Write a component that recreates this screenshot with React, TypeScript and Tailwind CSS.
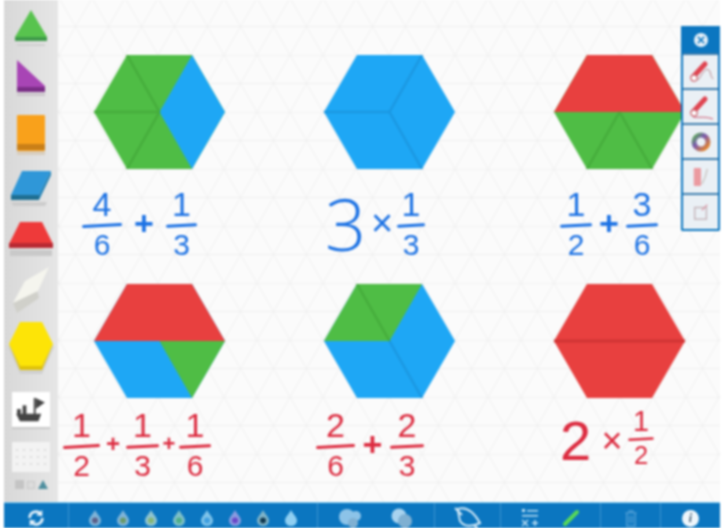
import React from "react";

const GREEN = "#4fbd45";
const BLUE = "#1ea7f5";
const RED = "#e8403f";

const OUT = "0,57 33,0 98,0 131,57 98,114 33,114";

function Hex({ children, fill }: { children?: React.ReactNode; fill: string }) {
  return (
    <svg viewBox="0 0 131 114" className="block w-[131px] h-[114px] mx-auto">
      <polygon points={OUT} fill={fill} />
      {children}
    </svg>
  );
}

function Seam({ x1, y1, x2 = 65.5, y2 = 57, c }: { x1: number; y1: number; x2?: number; y2?: number; c: string }) {
  return <line x1={x1} y1={y1} x2={x2} y2={y2} stroke={c} strokeWidth="2.5" />;
}

const G_S = "#46ad3c";
const B_S = "#1b98e2";
const R_S = "#d03434";

const HEXES = [
  <Hex fill={GREEN} key="a">
    <polygon points="65.5,57 98,0 131,57 98,114" fill={BLUE} />
    <Seam x1={33} y1={0} c={G_S} />
    <Seam x1={0} y1={57} c={G_S} />
    <Seam x1={33} y1={114} c={G_S} />
  </Hex>,
  <Hex fill={BLUE} key="b">
    <Seam x1={0} y1={57} c={B_S} />
    <Seam x1={98} y1={0} c={B_S} />
    <Seam x1={98} y1={114} c={B_S} />
  </Hex>,
  <Hex fill={GREEN} key="c">
    <polygon points="0,57 33,0 98,0 131,57" fill={RED} />
    <Seam x1={33} y1={114} c={G_S} />
    <Seam x1={98} y1={114} c={G_S} />
  </Hex>,
  <Hex fill={BLUE} key="d">
    <polygon points="0,57 33,0 98,0 131,57" fill={RED} />
    <polygon points="65.5,57 131,57 98,114" fill={GREEN} />
  </Hex>,
  <Hex fill={BLUE} key="e">
    <polygon points="0,57 33,0 98,0 65.5,57" fill={GREEN} />
    <Seam x1={33} y1={0} c={G_S} />
    <Seam x1={98} y1={114} c={B_S} />
  </Hex>,
  <Hex fill={RED} key="f">
    <line x1="0" y1="57" x2="131" y2="57" stroke={R_S} strokeWidth="3" />
  </Hex>,
];

function Frac({ n, d, w, red }: { n: string; d: string; w: number; red?: boolean }) {
  return (
    <div className="flex flex-col items-center" style={{ width: w }}>
      <span className="text-[34px] leading-[39px] h-[39px]">{n}</span>
      <span className={`block w-full h-[3px] rounded-full -rotate-3 ${red ? "bg-[#dc2c40]" : "bg-[#1c72e4]"}`} />
      <span className="text-[30px] leading-[35px] h-[35px]">{d}</span>
    </div>
  );
}

function Formula({ pl, red, children }: { pl: number; red?: boolean; children: React.ReactNode }) {
  return (
    <div
      className={`h-[80px] flex items-center font-['Liberation_Sans',sans-serif] ${red ? "text-[#dc2c40]" : "text-[#1c72e4]"}`}
      style={{ paddingLeft: pl }}
    >
      {children}
    </div>
  );
}

function Op({ c, w, size = 34 }: { c: string; w: number; size?: number }) {
  return (
    <span className="leading-none text-center font-bold" style={{ width: w, fontSize: size }}>
      {c}
    </span>
  );
}

function Drop({ c, i }: { c: string; i: string }) {
  return (
    <svg viewBox="0 0 12 16" className="w-[12px] h-[16px]">
      <path d="M6 0 C8 4 12 7 12 10.5 A6 5.5 0 0 1 0 10.5 C0 7 4 4 6 0Z" fill={c} />
      <circle cx="6" cy="10.5" r="3" fill={i} />
    </svg>
  );
}

const DROPS = [
  ["#7fb4d8", "#5c5f88"],
  ["#7fb4d8", "#6a9a6a"],
  ["#8fc4cf", "#86b676"],
  ["#7fc0c8", "#4fae88"],
  ["#7fc4ea", "#3f9fe0"],
  ["#8a9be0", "#6a48c8"],
  ["#7fb4c8", "#123a50"],
  ["#8fcff2", "#8fcff2"],
];

function Section({ w, children, gap, border = true }: { w: number; children?: React.ReactNode; gap?: number; border?: boolean }) {
  return (
    <div
      className={`h-full flex items-center justify-center pt-[5px] ${border ? "border-l border-[#3b93d0]" : ""}`}
      style={{ width: w, gap }}
    >
      {children}
    </div>
  );
}

function PanelBtn({ children }: { children: React.ReactNode }) {
  return <div className="h-[35px] flex items-center justify-center border-t-2 border-[#3f7fae] bg-[#eaf0f5]">{children}</div>;
}

function Pen({ under }: { under: React.ReactNode }) {
  return (
    <svg viewBox="0 0 26 26" className="w-[26px] h-[26px]" fill="none">
      <line x1="5" y1="18" x2="17" y2="5" stroke="#df4450" strokeWidth="5" strokeLinecap="round" />
      <circle cx="6" cy="19" r="3.2" stroke="#c9606a" strokeWidth="1.2" fill="#fff" />
      {under}
    </svg>
  );
}

export default function App() {
  return (
    <div className="w-[724px] h-[528px] bg-white overflow-hidden pl-[4px] pr-[4px] flex flex-col blur-[0.8px]">
      <div className="relative flex flex-1 min-h-0">
        <aside className="w-[54px] shrink-0 bg-gradient-to-r from-[#d8d8d8] to-[#e6e6e6] flex flex-col items-center">
          <svg viewBox="0 0 32 36" className="w-[32px] h-[36px] mt-[10px]">
            <polygon points="2,34 30,34 30,36 2,36" fill="#cfcfcf" />
            <polygon points="16,0 32,27 32,31 0,31 0,27" fill="#58c34e" />
            <polygon points="0,27 32,27 32,31 0,31" fill="#3f9a4a" />
          </svg>
          <svg viewBox="0 0 30 36" className="w-[30px] h-[36px] mt-[14px]">
            <rect x="1" y="33" width="28" height="3" fill="#cbc6cb" />
            <polygon points="1,0 29,26 29,32 1,32" fill="#a845b5" />
            <polygon points="1,27 29,27 29,32 1,32" fill="#7a2e86" />
          </svg>
          <svg viewBox="0 0 30 40" className="w-[30px] h-[40px] mt-[19px]">
            <rect x="1" y="36" width="28" height="4" fill="#d8cdbd" />
            <rect x="1" y="0" width="28" height="36" rx="1" fill="#f9a11b" />
            <rect x="1" y="29" width="28" height="6" fill="#c97f18" />
          </svg>
          <svg viewBox="0 0 44 35" className="w-[44px] h-[35px] mt-[16px]">
            <polygon points="2,31 38,31 36,35 4,35" fill="#cccccc" />
            <polygon points="13,0 42,0 30,24 30,29 2,29 2,24" fill="#2f97d8" />
            <polygon points="2,24 30,24 30,29 2,29" fill="#1f6f92" />
            <polygon points="30,24 42,0 42,4 30,29" fill="#1f7fb2" />
          </svg>
          <svg viewBox="0 0 46 36" className="w-[46px] h-[36px] mt-[16px]">
            <rect x="2" y="28" width="42" height="6" fill="#c9c9c9" />
            <polygon points="12,0 34,0 45,22 45,26 1,26 1,22" fill="#ee3a3a" />
            <polygon points="1,21 45,21 45,26 1,26" fill="#b92a33" />
          </svg>
          <svg viewBox="0 0 40 50" className="w-[40px] h-[50px] mt-[8px]">
            <polygon points="2,37 26,24 28,32 6,47" fill="#d0d0ca" />
            <polygon points="2,37 14,15 38,1 27,25" fill="#f5f5ee" />
          </svg>
          <svg viewBox="0 0 46 56" className="w-[46px] h-[56px] mt-[4px]">
            <polygon points="12,6 34,6 46,27 34,54 12,54 0,27" fill="#d0d0d0" />
            <polygon points="12,2 34,2 45,24 34,46 12,46 1,24" fill="#fde407" />
            <polygon points="1,24 12,46 34,46 45,24 34,50 12,50" fill="#dfc20b" />
          </svg>
          <div className="w-[38px] h-[35px] mt-[16px] bg-white flex items-center justify-center shadow-[0_2px_0_#c8c8c8]">
            <svg viewBox="0 0 32 28" className="w-[30px] h-[26px]" fill="#444">
              <rect x="19" y="1" width="2" height="18" />
              <polygon points="21,1 31,6 21,13" />
              <rect x="7" y="9" width="4" height="10" />
              <rect x="1" y="13" width="4" height="6" />
              <polygon points="0,18 27,18 24,26 4,26" />
            </svg>
          </div>
          <div className="w-[38px] h-[30px] mt-[15px] bg-[#f3f3f3] flex flex-wrap content-center justify-center gap-x-[5px] gap-y-[5px] px-[2px]">
            {Array.from({ length: 15 }).map((_, i) => (
              <span key={i} className="w-[2px] h-[2px] bg-[#dcdcdc]" />
            ))}
          </div>
          <div className="flex items-center gap-[3px] mt-[8px]">
            <span className="w-[9px] h-[9px] bg-[#c4c4c4]" />
            <span className="w-[8px] h-[8px] bg-[#dcdcdc] border border-[#c8c8c8]" />
            <svg viewBox="0 0 10 9" className="w-[10px] h-[9px]">
              <polygon points="5,0 10,9 0,9" fill="#4f8f9f" />
            </svg>
          </div>
        </aside>

        <main className="relative flex-1 bg-[#fbfbfb]">
          <svg className="absolute inset-0 w-full h-full" aria-hidden="true">
            <defs>
              <pattern id="iso" x="1" y="55" width="33" height="57" patternUnits="userSpaceOnUse">
                <path d="M0 0L33 57M33 0L0 57M0 28.5H33" stroke="#f0f0f0" strokeWidth="1" fill="none" />
                <path d="M0 0H33" stroke="#eaeaea" strokeWidth="1" fill="none" />
              </pattern>
            </defs>
            <rect width="100%" height="100%" fill="url(#iso)" />
          </svg>
          <div className="relative pt-[55px] grid grid-cols-[202px_202px_202px] gap-x-[28px] gap-y-[21px]">
            <div>
              {HEXES[0]}
              <div className="mt-[14px]">
                <Formula pl={24}>
                  <Frac n="4" d="6" w={40} />
                  <Op c="+" w={44} />
                  <Frac n="1" d="3" w={31} />
                </Formula>
              </div>
            </div>
            <div>
              {HEXES[1]}
              <div className="mt-[14px]">
                <Formula pl={37}>
                  <span className="text-[72px] leading-none font-light font-['Open_Sans',sans-serif] w-[42px]">3</span>
                  <span className="text-[38px] leading-none w-[30px] text-center">×</span>
                  <Frac n="1" d="3" w={28} />
                </Formula>
              </div>
            </div>
            <div>
              {HEXES[2]}
              <div className="mt-[14px]">
                <Formula pl={42}>
                  <Frac n="1" d="2" w={32} />
                  <Op c="+" w={34} />
                  <Frac n="3" d="6" w={32} />
                </Formula>
              </div>
            </div>
            <div>
              {HEXES[3]}
              <div className="mt-[6px]">
                <Formula pl={5} red>
                  <Frac n="1" d="2" w={37} red />
                  <Op c="+" w={26} size={24} />
                  <Frac n="1" d="3" w={33} red />
                  <Op c="+" w={20} size={22} />
                  <Frac n="1" d="6" w={32} red />
                </Formula>
              </div>
            </div>
            <div>
              {HEXES[4]}
              <div className="mt-[6px]">
                <Formula pl={28} red>
                  <Frac n="2" d="6" w={39} red />
                  <Op c="+" w={35} />
                  <Frac n="2" d="3" w={34} red />
                </Formula>
              </div>
            </div>
            <div>
              {HEXES[5]}
              <div className="mt-[6px]">
                <Formula pl={42} red>
                  <span className="text-[56px] leading-none w-[38px] -mt-[6px]">2</span>
                  <span className="text-[36px] leading-none w-[28px] text-center -mt-[6px]">×</span>
                  <div className="-mt-[14px] scale-[0.85]">
                    <Frac n="1" d="2" w={30} red />
                  </div>
                </Formula>
              </div>
            </div>
          </div>
        </main>

        <div className="absolute right-0 top-[26px] w-[39px] h-[205px] border-x-2 border-b-2 border-[#0b76c0] rounded-b-[2px] flex flex-col bg-[#eaf0f5]">
          <div className="h-[27px] shrink-0 bg-[#0b76c0] flex items-center justify-center">
            <span className="w-[14px] h-[14px] rounded-full bg-[#e6f0f8] flex items-center justify-center text-[#0b76c0]">
              <svg viewBox="0 0 10 10" className="w-[8px] h-[8px]" stroke="currentColor" strokeWidth="2">
                <path d="M1 1L9 9M9 1L1 9" />
              </svg>
            </span>
          </div>
          <PanelBtn>
            <Pen under={<path d="M10 21C14 16 17 8 21 11C23 13 22 17 25 20" stroke="#b98a90" strokeWidth="1" />} />
          </PanelBtn>
          <PanelBtn>
            <Pen under={<path d="M5 23C11 24 17 22 25 25" stroke="#cf5a72" strokeWidth="1" />} />
          </PanelBtn>
          <PanelBtn>
            <svg viewBox="0 0 20 20" className="w-[20px] h-[20px]" fill="none">
              <circle cx="10" cy="10" r="7" stroke="url(#ring)" strokeWidth="5" />
              <defs>
                <linearGradient id="ring" x1="0" y1="0" x2="1" y2="1">
                  <stop offset="0" stopColor="#5cae58" />
                  <stop offset="0.4" stopColor="#7a5ab0" />
                  <stop offset="1" stopColor="#f08a20" />
                </linearGradient>
              </defs>
            </svg>
          </PanelBtn>
          <PanelBtn>
            <svg viewBox="0 0 20 24" className="w-[18px] h-[22px]" fill="none">
              <rect x="2" y="2" width="8" height="20" rx="1" fill="#eb9aa0" />
              <path d="M17 3C16 9 14 15 11 20" stroke="#c9c3bf" strokeWidth="1.5" />
            </svg>
          </PanelBtn>
          <PanelBtn>
            <svg viewBox="0 0 20 20" className="w-[18px] h-[18px]" fill="none" stroke="#c3b3b8" strokeWidth="1.5">
              <rect x="3" y="5" width="13" height="13" />
              <path d="M11 8L17 2" stroke="#d89aa8" />
            </svg>
          </PanelBtn>
        </div>
      </div>

      <div className="h-[26px] shrink-0 border-t border-[#8ad0f2] bg-[#0b76c0] flex">
        <Section w={64} border={false}>
          <svg viewBox="0 0 20 20" className="w-[18px] h-[18px]" fill="none" stroke="#e4f1fa" strokeWidth="3">
            <path d="M3 10A7 7 0 0 1 15 5" />
            <path d="M17 10A7 7 0 0 1 5 15" />
            <polygon points="17,1 17,8 10,7" fill="#e4f1fa" stroke="none" />
            <polygon points="3,19 3,12 10,13" fill="#e4f1fa" stroke="none" />
          </svg>
        </Section>
        <Section w={249} gap={16}>
          {DROPS.map(([c, i], k) => (
            <Drop key={k} c={c} i={i} />
          ))}
        </Section>
        <Section w={117} gap={28}>
          <svg viewBox="0 0 24 20" className="w-[24px] h-[20px]">
            <circle cx="9" cy="9" r="8" fill="#8cc3e8" />
            <circle cx="18" cy="8" r="5" fill="#8cc3e8" />
            <circle cx="15" cy="15" r="5" fill="#7fb0d2" />
          </svg>
          <svg viewBox="0 0 24 20" className="w-[24px] h-[20px]">
            <circle cx="9" cy="8" r="7.5" fill="#a8d3ef" />
            <circle cx="15" cy="13" r="7" fill="#7fb0d2" />
          </svg>
        </Section>
        <Section w={66}>
          <svg viewBox="0 0 28 22" className="w-[28px] h-[22px]" fill="none" stroke="#cfe7f6" strokeWidth="2">
            <path d="M4 2C10 0 18 2 26 16C18 20 10 20 6 14C5 9 4 6 4 2Z" />
            <path d="M1 1L8 8M20 18L25 23" />
          </svg>
        </Section>
        <Section w={100} gap={24}>
          <svg viewBox="0 0 16 18" className="w-[16px] h-[18px]" fill="#bcdff3">
            <rect x="0" y="0" width="3" height="3" />
            <rect x="5" y="1" width="11" height="1.5" />
            <rect x="0" y="6" width="16" height="1.5" />
            <path d="M0 11L6 17M6 11L0 17" stroke="#bcdff3" strokeWidth="1.5" />
            <path d="M10 14H16M13 11V17" stroke="#bcdff3" strokeWidth="1.5" />
          </svg>
          <svg viewBox="0 0 18 18" className="w-[18px] h-[18px]">
            <line x1="3" y1="15" x2="15" y2="3" stroke="#58d858" strokeWidth="4" strokeLinecap="round" />
          </svg>
        </Section>
        <Section w={60}>
          <svg viewBox="0 0 14 18" className="w-[14px] h-[17px]" fill="none" stroke="#4f9ed6" strokeWidth="1.5">
            <path d="M1 3H13M5 3V1H9V3M2.5 3V17H11.5V3M5.5 6V14M8.5 6V14" />
          </svg>
        </Section>
        <Section w={60}>
          <span className="w-[17px] h-[17px] rounded-full bg-[#eef6fb] flex items-center justify-center text-[#405a70] text-[12px] leading-none font-bold font-['Liberation_Serif',serif] italic">
            i
          </span>
        </Section>
      </div>
    </div>
  );
}
